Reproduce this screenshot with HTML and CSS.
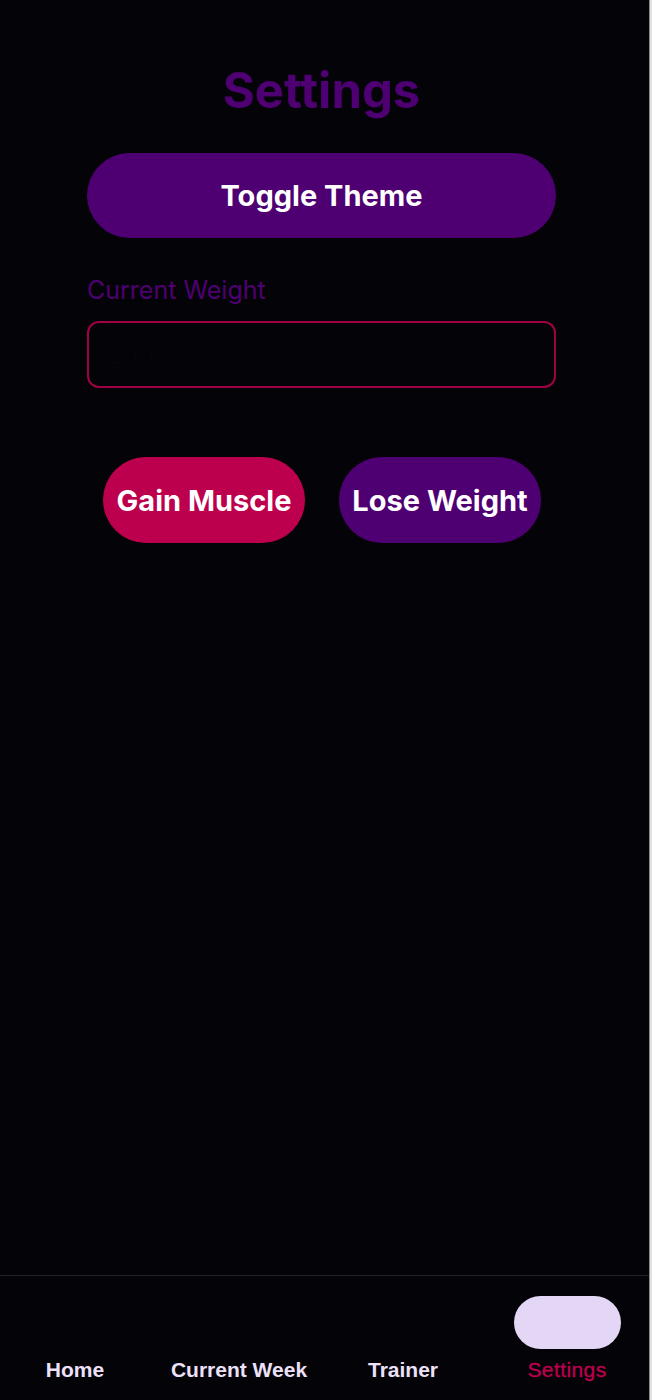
FILE: index.html
```html
<!DOCTYPE html>
<html lang="en">
<head>
<meta charset="utf-8">
<title>Settings</title>
<link rel="stylesheet" href="styles.css">
</head>
<body>
<div class="app">
  <main class="content">
    <h1 class="title">Settings</h1>
    <button class="btn btn-purple btn-wide">Toggle Theme</button>
    <label class="field-label" for="weight">Current Weight</label>
    <input class="field" id="weight" type="text" placeholder="200">
    <div class="goal-row">
      <button class="btn btn-pink btn-goal">Gain Muscle</button>
      <button class="btn btn-purple btn-goal">Lose Weight</button>
    </div>
  </main>
  <nav class="nav">
    <div class="nav-item"><span class="pill"></span><span class="nav-label">Home</span></div>
    <div class="nav-item"><span class="pill"></span><span class="nav-label">Current Week</span></div>
    <div class="nav-item"><span class="pill"></span><span class="nav-label">Trainer</span></div>
    <div class="nav-item active"><span class="pill"></span><span class="nav-label">Settings</span></div>
  </nav>
</div>
</body>
</html>
```

FILE: styles.css
```css
html {
  background: #e2e2e2;
}
body {
  margin: 0;
  font-family: Inter, "Noto Sans", sans-serif;
}
.app {
  width: 649px;
  height: 1400px;
  background: #040308;
  border-right: 1px solid #8c8c8c;
  display: flex;
  flex-direction: column;
}
.content {
  flex: 1;
  display: flex;
  flex-direction: column;
  width: 469px;
  margin-left: 87px;
}
.title {
  margin: 61px 0 0;
  font-size: 49px;
  line-height: 59px;
  font-weight: 700;
  color: #4e0072;
  text-align: center;
}
.btn {
  border: none;
  border-radius: 999px;
  color: #ffffff;
  font-family: Inter, "Noto Sans", sans-serif;
  font-weight: 700;
  font-size: 29px;
  padding: 0;
  cursor: pointer;
}
.btn-purple {
  background: #4e0072;
}
.btn-pink {
  background: #bc004d;
}
.btn-wide {
  margin-top: 33px;
  height: 85px;
  width: 100%;
}
.field-label {
  margin-top: 37px;
  font-size: 25px;
  line-height: 30px;
  color: #4e0072;
}
.field {
  margin-top: 16px;
  box-sizing: border-box;
  height: 67px;
  width: 100%;
  border: 2px solid #a00044;
  border-radius: 12px;
  background: transparent;
  padding: 0 18px;
  font-family: Inter, "Noto Sans", sans-serif;
  font-size: 25px;
  color: #ffffff;
  outline: none;
}
.field::placeholder {
  color: #060509;
}
.goal-row {
  margin-top: 69px;
  display: flex;
  justify-content: center;
  gap: 34px;
  padding-left: 1px;
}
.btn-goal {
  width: 202px;
  height: 86px;
}
.nav {
  height: 124px;
  border-top: 1px solid #222127;
  display: flex;
  gap: 14px;
}
.nav-item {
  width: 150px;
  display: flex;
  flex-direction: column;
  align-items: center;
  padding-top: 20px;
}
.pill {
  width: 107px;
  height: 53px;
  border-radius: 999px;
  background: transparent;
}
.active .pill {
  background: #e4d6f5;
}
.nav-label {
  margin-top: 9px;
  font-family: "Liberation Sans", Arial, sans-serif;
  font-size: 21px;
  line-height: 24px;
  font-weight: 700;
  color: #ece1f9;
}
.active .nav-label {
  color: #bc004d;
  font-weight: 400;
  letter-spacing: 0.4px;
  -webkit-text-stroke: 0.35px #bc004d;
}
```
